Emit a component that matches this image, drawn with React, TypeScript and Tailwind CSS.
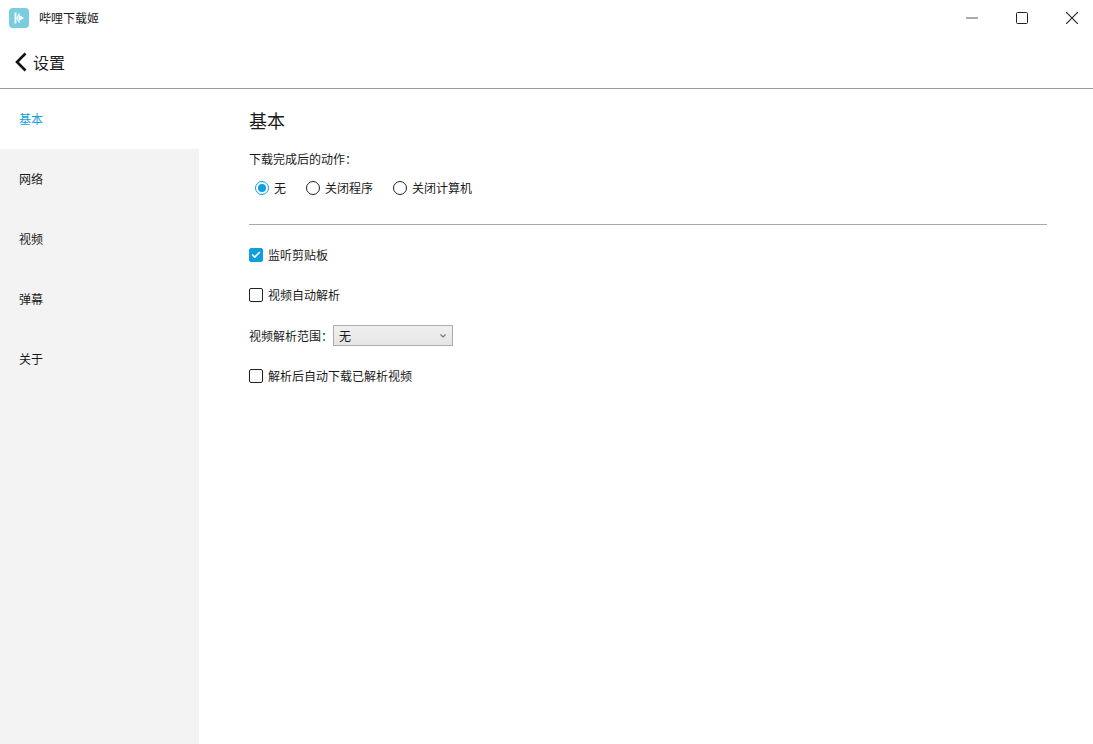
import { Check } from "lucide-react";

const navItems = ["基本", "网络", "视频", "弹幕", "关于"];
const actions = ["无", "关闭程序", "关闭计算机"];

function CheckRow({ label, checked = false }: { label: string; checked?: boolean }) {
  return (
    <div className="flex items-center h-[14px] gap-[5px]">
      <span
        className={`w-[14px] h-[14px] rounded-[2px] flex items-center justify-center border ${
          checked ? "bg-[#0f9fdb] border-[#0f9fdb]" : "bg-white border-[#222]"
        }`}
      >
        {checked && <Check size={10} strokeWidth={4} color="white" />}
      </span>
      <span className="text-[12px] leading-[14px] text-[#1a1a1a]">{label}</span>
    </div>
  );
}

export default function App() {
  return (
    <div
      className="w-[1093px] h-[744px] flex flex-col bg-white overflow-hidden text-[#1a1a1a]"
      style={{ fontFamily: '"Noto Sans CJK SC", "Liberation Sans", sans-serif' }}
    >
      <div className="h-[36px] flex items-center shrink-0">
        <svg width="20" height="20" viewBox="0 0 20 20" className="ml-[9px]">
          <rect width="20" height="20" rx="4" fill="#7accdf" />
          <path d="M6.5 4.5v11" stroke="white" strokeWidth="1.8" fill="none" />
          <path d="M8 10l2.5-4.5M8 10l2.5 4.5" stroke="white" strokeWidth="1.3" fill="none" />
          <path d="M10.5 7.2l4.5 2.8-4.5 2.8-1.2-2.8z" fill="white" />
        </svg>
        <span className="ml-[10px] text-[12px]">哔哩下载姬</span>
        <div className="ml-auto flex items-center mr-[15px] gap-[38px]">
          <svg width="12" height="12" viewBox="0 0 12 12">
            <path d="M0 6h12" stroke="#aaa" strokeWidth="2" />
          </svg>
          <svg width="12" height="12" viewBox="0 0 12 12">
            <rect x="0.5" y="0.5" width="11" height="11" rx="1" fill="none" stroke="#222" strokeWidth="1" />
          </svg>
          <svg width="12" height="12" viewBox="0 0 12 12">
            <path d="M0 0l12 12M12 0L0 12" stroke="#222" strokeWidth="1.1" />
          </svg>
        </div>
      </div>

      <div className="h-[53px] flex items-center shrink-0 border-b border-[#999]">
        <svg width="12" height="20" viewBox="0 0 12 20" className="ml-[15px]">
          <path d="M10.5 1.5L2 10l8.5 8.5" fill="none" stroke="#111" strokeWidth="2.6" />
        </svg>
        <span className="ml-[6px] text-[16px]">设置</span>
      </div>

      <div className="flex flex-1 min-h-0">
        <div className="w-[199px] bg-[#f3f3f3] flex flex-col shrink-0">
          {navItems.map((item, i) => (
            <div
              key={item}
              className={`h-[60px] flex items-center pl-[19px] text-[12px] ${
                i === 0 ? "bg-white text-[#0f9fdb]" : "text-[#1a1a1a]"
              }`}
            >
              {item}
            </div>
          ))}
        </div>

        <div className="flex-1 pl-[50px] pr-[46px] pt-[19px]">
          <h1 className="text-[18px] leading-[24px] font-normal">基本</h1>
          <p className="mt-[19px] text-[12px] leading-[16px]">下载完成后的动作：</p>
          <div className="flex items-center mt-[14px] pl-[6px] gap-[20px]">
            {actions.map((action, i) => (
              <div key={action} className="flex items-center gap-[5px]">
                <span
                  className={`w-[14px] h-[14px] rounded-full border flex items-center justify-center ${
                    i === 0 ? "border-[#0f9fdb]" : "border-[#222]"
                  }`}
                >
                  {i === 0 && <span className="w-[8px] h-[8px] rounded-full bg-[#0f9fdb]" />}
                </span>
                <span className="text-[12px] leading-[14px]">{action}</span>
              </div>
            ))}
          </div>
          <div className="mt-[29px] border-t border-[#aaa]" />

          <div className="mt-[23px] flex flex-col items-start">
            <CheckRow label="监听剪贴板" checked />
            <div className="mt-[26px]">
              <CheckRow label="视频自动解析" />
            </div>
            <div className="mt-[23px] flex items-center h-[21px]">
              <span className="text-[12px]">视频解析范围：</span>
              <div className="w-[120px] h-[21px] border border-[#acacac] bg-gradient-to-b from-[#f0f0f0] to-[#e5e5e5] flex items-center pl-[5px] pr-[6px] text-[12px]">
                无
                <svg width="6" height="4" viewBox="0 0 6 4" className="ml-auto">
                  <path d="M0.5 0.5L3 3l2.5-2.5" fill="none" stroke="#777" strokeWidth="1.2" />
                </svg>
              </div>
            </div>
            <div className="mt-[23px]">
              <CheckRow label="解析后自动下载已解析视频" />
            </div>
          </div>
        </div>
      </div>
    </div>
  );
}
